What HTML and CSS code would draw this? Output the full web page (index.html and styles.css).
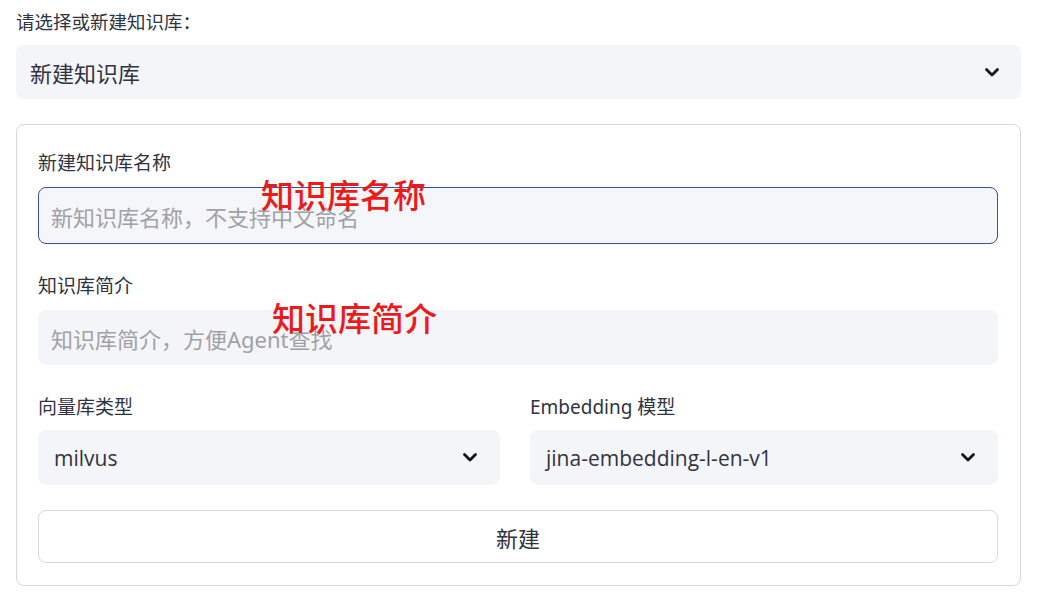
FILE: index.html
```html
<!DOCTYPE html>
<html lang="zh">
<head>
<meta charset="utf-8">
<link rel="stylesheet" href="styles.css">
</head>
<body>
<div class="page">
  <div class="top-label">请选择或新建知识库：</div>
  <div class="select big">
    <span class="value">新建知识库</span>
    <svg class="chev" viewBox="0 0 16 11" width="16" height="11"><polyline points="2.5,2.5 8,8 13.5,2.5" fill="none" stroke="#111" stroke-width="2.8" stroke-linecap="round" stroke-linejoin="round"/></svg>
  </div>

  <div class="form">
    <div class="field">
      <div class="label">新建知识库名称</div>
      <div class="input focused"><span class="ph">新知识库名称，不支持中文命名</span></div>
      <span class="note note-name">知识库名称</span>
    </div>
    <div class="field">
      <div class="label">知识库简介</div>
      <div class="input"><span class="ph">知识库简介，方便Agent查找</span></div>
      <span class="note note-desc">知识库简介</span>
    </div>
    <div class="cols">
      <div class="field">
        <div class="label">向量库类型</div>
        <div class="select small">
          <span class="value latin">milvus</span>
          <svg class="chev" viewBox="0 0 16 11" width="16" height="11"><polyline points="2.5,2.5 8,8 13.5,2.5" fill="none" stroke="#111" stroke-width="2.8" stroke-linecap="round" stroke-linejoin="round"/></svg>
        </div>
      </div>
      <div class="field">
        <div class="label">Embedding 模型</div>
        <div class="select small">
          <span class="value latin">jina-embedding-l-en-v1</span>
          <svg class="chev" viewBox="0 0 16 11" width="16" height="11"><polyline points="2.5,2.5 8,8 13.5,2.5" fill="none" stroke="#111" stroke-width="2.8" stroke-linecap="round" stroke-linejoin="round"/></svg>
        </div>
      </div>
    </div>
    <div class="button">新建</div>
  </div>
</div>
</body>
</html>
```

FILE: styles.css
```css
* { box-sizing: border-box; }
html, body { margin: 0; padding: 0; background: #fff; }
body {
  font-family: "Noto Sans", "Noto Sans CJK SC", sans-serif;
  color: #31333f;
}
.page {
  padding: 10px 19px 0 16px;
}
.top-label {
  font-size: 18.5px;
  line-height: 24px;
  margin-bottom: 11px;
  color: #31333f;
}
.select {
  display: flex;
  align-items: center;
  justify-content: space-between;
  background: #f4f5f8;
  border-radius: 8px;
}
.select.big {
  height: 54px;
  padding: 0 21px 0 14px;
  font-size: 22px;
}
.select.small {
  height: 55px;
  padding: 0 22px 0 16px;
}
.value { color: #31333f; }
.latin { font-family: "Open Sans", "Noto Sans", sans-serif; font-size: 21px; }
.chev { display: block; }

.form {
  margin-top: 25px;
  border: 1px solid #d7d8dc;
  border-radius: 8px;
  padding: 26px 22px 22px 21px;
  display: flex;
  flex-direction: column;
  gap: 30px;
}
.field { position: relative; }
.label {
  font-size: 19px;
  line-height: 24px;
  margin-bottom: 12px;
  color: #31333f;
}
.input {
  height: 55px;
  background: #f4f5f8;
  border-radius: 8px;
  display: flex;
  align-items: center;
  padding: 0 12px;
  font-size: 22px;
  border: 1px solid transparent;
}
.input.focused {
  height: 57px;
  background: #f5f6f9;
  border: 1.6px solid #3d4f9c;
}
.ph { color: #a0a1a6; }
.note {
  position: absolute;
  color: #ec1b1b;
  font-size: 33px;
  line-height: 40px;
  font-weight: 500;
  font-family: "Noto Sans CJK SC", sans-serif;
}
.note-name { left: 223px; top: 23px; }
.note-desc { left: 234px; top: 23px; }

.cols {
  display: grid;
  grid-template-columns: 462px 468px;
  column-gap: 30px;
}
.cols .label { margin-bottom: 11px; }
.button {
  margin-top: -5px;
  height: 53px;
  border: 1px solid #d7d8dc;
  border-radius: 8px;
  display: flex;
  align-items: center;
  justify-content: center;
  font-size: 22px;
  color: #31333f;
}
```
